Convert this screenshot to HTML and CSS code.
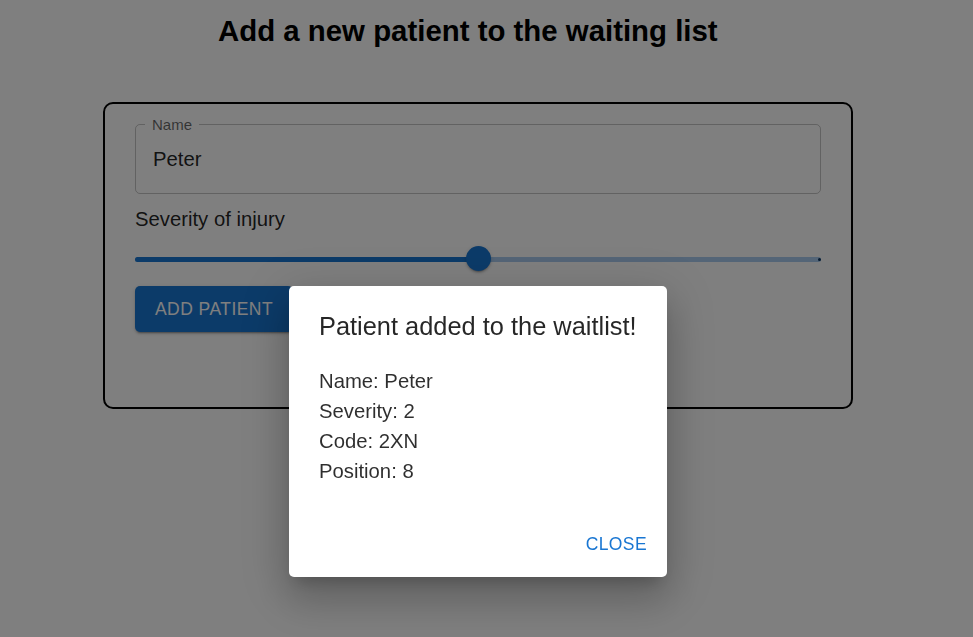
FILE: index.html
```html
<!DOCTYPE html>
<html lang="en">
<head>
<meta charset="utf-8">
<title>Waiting list</title>
<link rel="stylesheet" href="styles.css">
</head>
<body>
<main class="page">
  <h1 class="title">Add a new patient to the waiting list</h1>
  <form class="card">
    <div class="field">
      <span class="field-label">Name</span>
      <span class="field-value">Peter</span>
    </div>
    <div class="slider-label">Severity of injury</div>
    <div class="slider">
      <div class="rail"></div>
      <div class="track" style="width: 50%"></div>
      <div class="mark"></div>
      <div class="thumb" style="left: 50%"></div>
    </div>
    <div class="actions-row">
      <button type="button" class="btn-contained">ADD PATIENT</button>
    </div>
  </form>
</main>
<div class="backdrop"></div>
<div class="dialog" role="dialog">
  <h2 class="dialog-title">Patient added to the waitlist!</h2>
  <div class="dialog-content">
    <div>Name: Peter</div>
    <div>Severity: 2</div>
    <div>Code: 2XN</div>
    <div>Position: 8</div>
  </div>
  <div class="dialog-actions">
    <button type="button" class="btn-text">CLOSE</button>
  </div>
</div>
</body>
</html>
```
FILE: styles.css
```css
html, body {
  margin: 0;
  padding: 0;
  background: #ffffff;
  font-family: "Liberation Sans", Arial, sans-serif;
}
.page {
  padding-left: 103px;
  width: 750px;
}
.title {
  margin: 0;
  padding: 14px 0 0 115px;
  font-size: 29.4px;
  line-height: 34px;
  font-weight: bold;
  color: #000;
  white-space: nowrap;
}
.card {
  box-sizing: border-box;
  width: 750px;
  height: 307px;
  margin-top: 54px;
  border: 2px solid #000;
  border-radius: 10px;
  padding: 20px 30px 0 30px;
}
.field {
  position: relative;
  box-sizing: border-box;
  height: 70px;
  border: 1px solid rgba(0,0,0,0.23);
  border-radius: 5px;
  display: flex;
  align-items: center;
  padding-left: 17px;
}
.field-label {
  position: absolute;
  left: 9px;
  top: -9px;
  padding: 0 7px;
  background: #fff;
  font-size: 15px;
  line-height: 17px;
  color: rgba(0,0,0,0.6);
}
.field-value {
  font-size: 20.3px;
  line-height: 24px;
  color: rgba(0,0,0,0.87);
}
.slider-label {
  margin-top: 10px;
  font-size: 20.3px;
  line-height: 30px;
  color: rgba(0,0,0,0.87);
}
.slider {
  position: relative;
  margin-top: 12px;
  height: 26px;
}
.rail {
  position: absolute;
  left: 0; right: 0;
  top: 11px;
  height: 5px;
  border-radius: 3px;
  background: #1976d2;
  opacity: 0.38;
}
.track {
  position: absolute;
  left: 0;
  top: 11px;
  height: 5px;
  border-radius: 3px;
  background: #1976d2;
}
.mark {
  position: absolute;
  right: 0;
  top: 12px;
  width: 3px;
  height: 3px;
  border-radius: 50%;
  background: #0d3560;
}
.thumb {
  position: absolute;
  top: 0;
  width: 25px;
  height: 25px;
  margin-left: -12px;
  border-radius: 50%;
  background: #1976d2;
  box-shadow: 0 3px 1px -2px rgba(0,0,0,0.2), 0 2px 2px 0 rgba(0,0,0,0.14), 0 1px 5px 0 rgba(0,0,0,0.12);
}
.actions-row {
  margin-top: 14px;
}
.btn-contained {
  height: 46px;
  padding: 0 20px;
  border: 0;
  border-radius: 5px;
  background: #1976d2;
  color: #fff;
  font-family: "Liberation Sans", Arial, sans-serif;
  font-size: 17.5px;
  font-weight: 500;
  letter-spacing: 0.45px;
  box-shadow: 0 3px 1px -2px rgba(0,0,0,0.2), 0 2px 2px 0 rgba(0,0,0,0.14), 0 1px 5px 0 rgba(0,0,0,0.12);
}
.backdrop {
  position: fixed;
  inset: 0;
  background: rgba(0,0,0,0.5);
}
.dialog {
  position: absolute;
  left: 289px;
  top: 286px;
  width: 378px;
  height: 291px;
  box-sizing: border-box;
  background: #fff;
  border-radius: 5px;
  display: flex;
  flex-direction: column;
  box-shadow: 0 11px 15px -7px rgba(0,0,0,0.2), 0 24px 38px 3px rgba(0,0,0,0.14), 0 9px 46px 8px rgba(0,0,0,0.12);
}
.dialog-title {
  margin: 0;
  padding: 20px 30px;
  font-size: 25.4px;
  line-height: 40px;
  font-weight: normal;
  color: rgba(0,0,0,0.85);
  white-space: nowrap;
}
.dialog-content {
  flex: 1;
  padding: 0 30px;
  margin-top: 0;
  font-size: 20.3px;
  line-height: 30px;
  color: rgba(0,0,0,0.82);
}
.dialog-actions {
  display: flex;
  justify-content: flex-end;
  padding: 10px;
}
.btn-text {
  height: 46px;
  padding: 0 10px;
  border: 0;
  background: transparent;
  color: #1976d2;
  font-family: "Liberation Sans", Arial, sans-serif;
  font-size: 17.5px;
  font-weight: 500;
  letter-spacing: 0.4px;
}
```
